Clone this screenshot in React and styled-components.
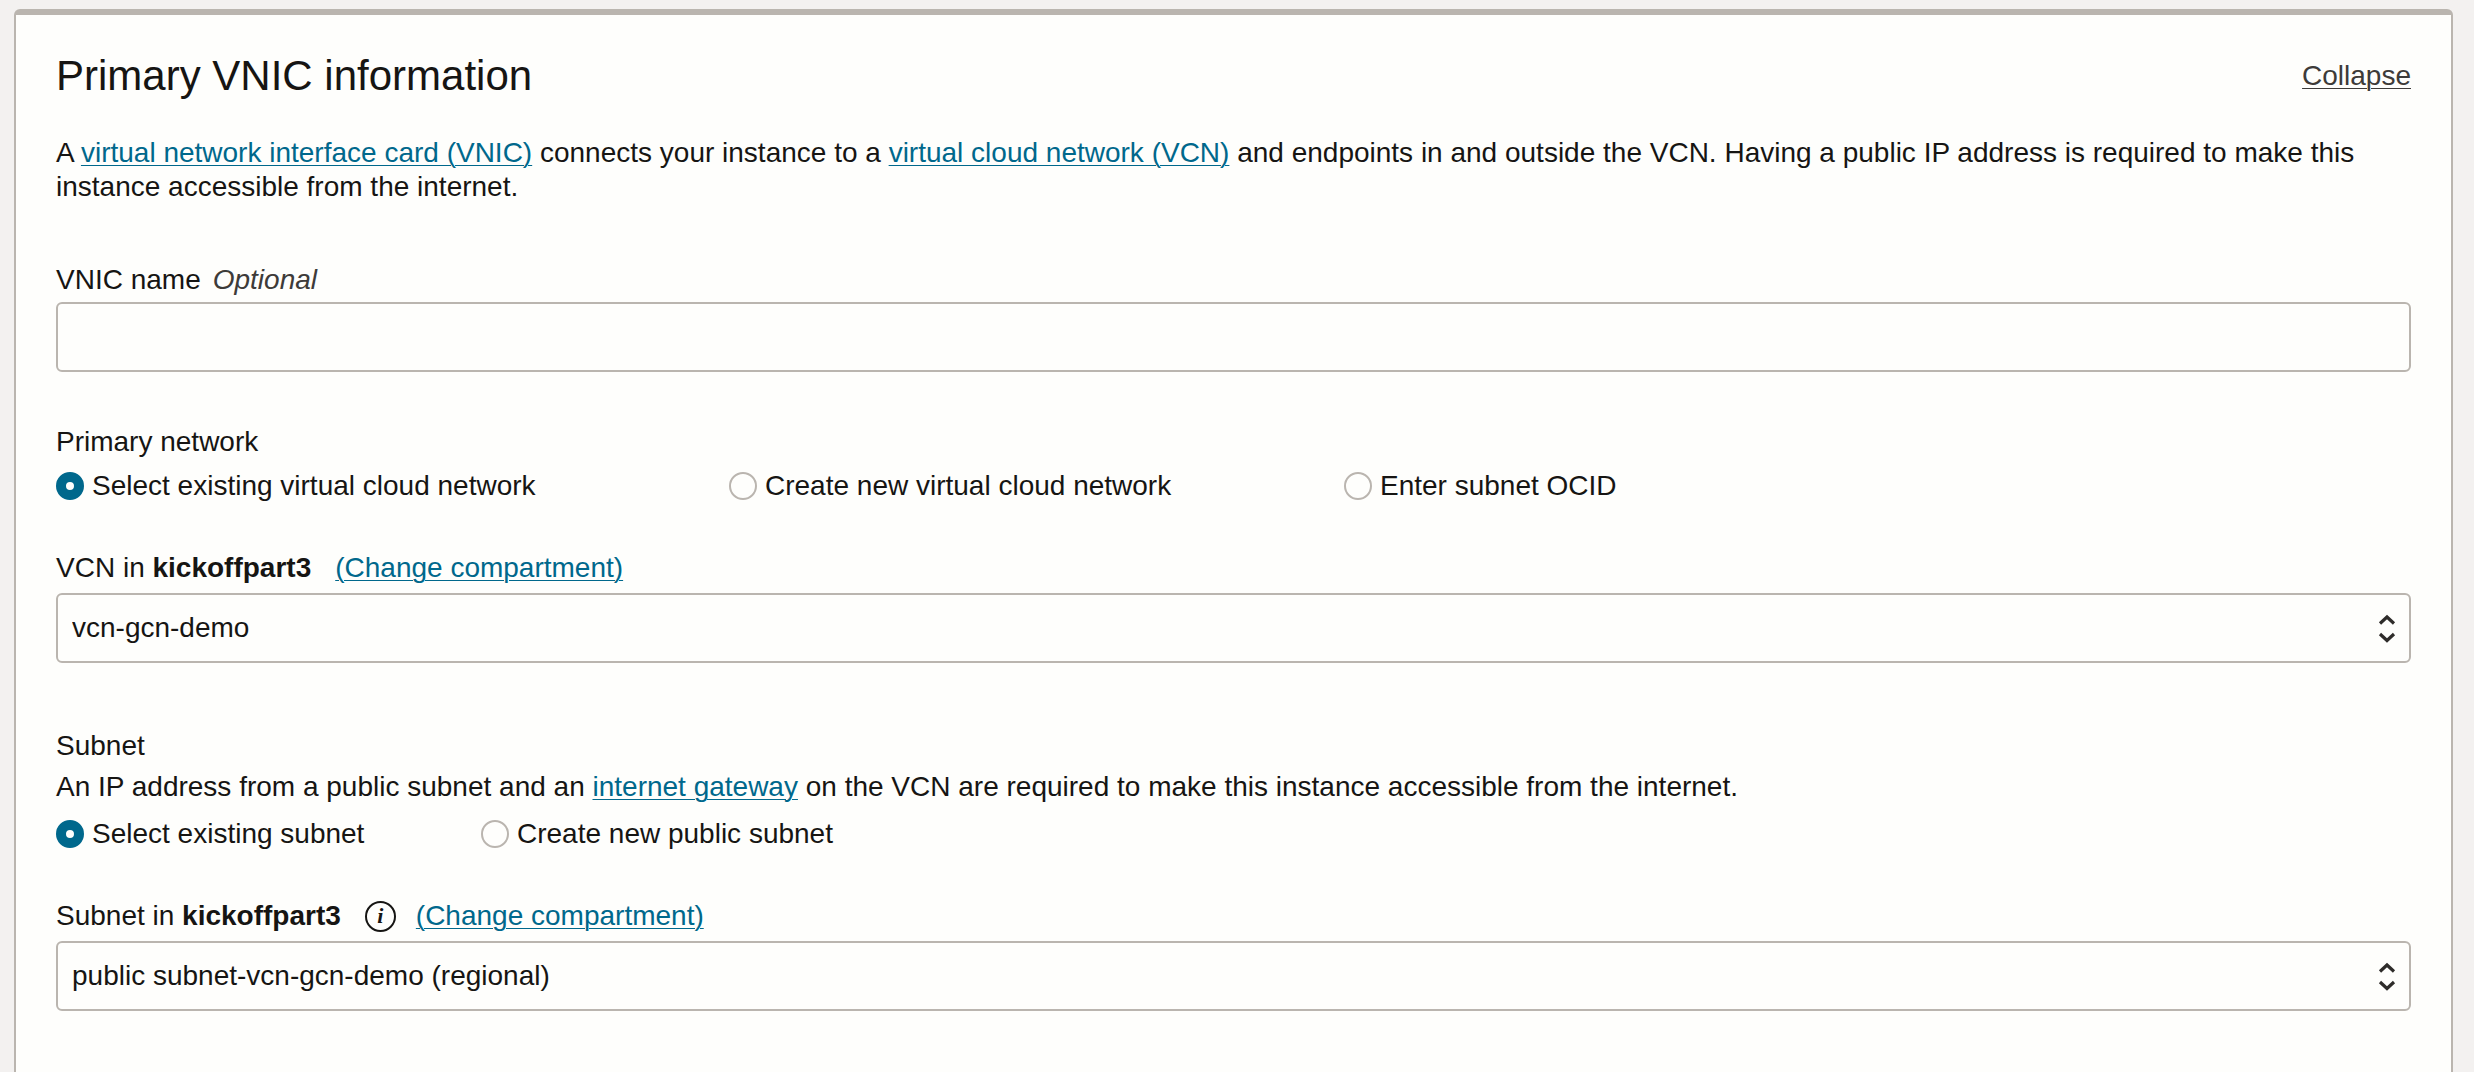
import React, { useId, useState } from "react";
import styled, { createGlobalStyle } from "styled-components";

const color = {
  page: "#f3f1f0",
  surface: "#fefefc",
  border: "#bab5af",
  text: "#161513",
  muted: "#3d3b39",
  link: "#00688c",
};

const GlobalStyle = createGlobalStyle`
  *, *::before, *::after { box-sizing: border-box; }
  body {
    margin: 0;
    background: ${color.page};
    color: ${color.text};
    font: 28px/34px "Liberation Sans", Arial, sans-serif;
  }
`;

const Page = styled.main`
  display: flex;
  flex-direction: column;
  min-height: 100vh;
  padding: 9px 21px 0 14px;
`;

const Panel = styled.section`
  flex: 1;
  padding: 35px 40px 40px;
  background: ${color.surface};
  border: 2px solid ${color.border};
  border-top-width: 6px;
  border-bottom: 0;
  border-radius: 6px 6px 0 0;
`;

const PanelHeader = styled.header`
  display: flex;
  align-items: center;
  justify-content: space-between;
  margin-bottom: 34px;
`;

const Title = styled.h2`
  margin: 0;
  font-size: 42px;
  line-height: 52px;
  font-weight: 400;
`;

const Link = styled.a`
  color: ${(p) => (p.$muted ? color.muted : color.link)};
  text-decoration: underline 1px;
  text-underline-offset: 3px;
`;

const Text = styled.p`
  margin: 0;
`;

const Field = styled.div`
  display: flex;
  flex-direction: column;
  gap: ${(p) => p.$gap}px;
  margin-top: ${(p) => p.$space}px;
`;

const LabelRow = styled.div`
  display: flex;
  align-items: center;
  gap: 24px;
`;

const Optional = styled.em`
  margin-left: 12px;
  color: ${color.muted};
`;

const TextInput = styled.input`
  width: 100%;
  height: 70px;
  padding: 0 14px;
  font: inherit;
  color: inherit;
  background: ${color.surface};
  border: 2px solid ${color.border};
  border-radius: 6px;
`;

const SelectWrap = styled.div`
  display: grid;
  align-items: center;

  > * { grid-area: 1 / 1; }
`;

const SelectBox = styled(TextInput).attrs({ as: "select" })`
  appearance: none;
`;

const Arrows = styled.svg`
  justify-self: end;
  margin-right: 14px;
  pointer-events: none;
`;

const Group = styled.fieldset`
  margin: ${(p) => p.$space}px 0 0;
  padding: 0;
  border: 0;
  min-width: 0;
`;

const Legend = styled.legend`
  padding: 0;
`;

const Hint = styled(Text)`
  margin-top: 7px;
`;

const Options = styled.div`
  display: grid;
  grid-template-columns: ${(p) => p.$columns};
  margin-top: ${(p) => p.$space}px;
`;

const Option = styled.label`
  display: flex;
  align-items: center;
  gap: 8px;
  white-space: nowrap;
`;

const Radio = styled.input.attrs({ type: "radio" })`
  appearance: none;
  flex: none;
  width: 28px;
  height: 28px;
  margin: 0;
  background: ${color.surface};
  border: 2px solid ${color.border};
  border-radius: 50%;

  &:checked {
    border: 10px solid ${color.link};
  }
`;

const InfoButton = styled.button`
  display: flex;
  align-items: center;
  justify-content: center;
  width: 31px;
  height: 31px;
  margin-right: -4px;
  padding: 0;
  font: italic 700 22px/24px "Liberation Serif", serif;
  color: ${color.text};
  background: none;
  border: 2px solid ${color.text};
  border-radius: 50%;
`;

function RadioGroup({ label, hint, options, columns, space, optionSpace }) {
  const name = useId();
  const [value, setValue] = useState(options[0]);
  return (
    <Group $space={space}>
      <Legend>{label}</Legend>
      {hint}
      <Options $columns={columns} $space={optionSpace}>
        {options.map((option) => (
          <Option key={option}>
            <Radio name={name} checked={value === option} onChange={() => setValue(option)} />
            {option}
          </Option>
        ))}
      </Options>
    </Group>
  );
}

function CompartmentSelect({ label, compartment, option, info }) {
  const id = useId();
  return (
    <Field $space={48} $gap={8}>
      <LabelRow>
        <label htmlFor={id}>
          {label} in <strong>{compartment}</strong>
        </label>
        {info && <InfoButton type="button" aria-label="More information">i</InfoButton>}
        <Link href="#compartment">(Change compartment)</Link>
      </LabelRow>
      <SelectWrap>
        <SelectBox id={id}>
          <option>{option}</option>
        </SelectBox>
        <Arrows width="20" height="32" viewBox="0 0 20 32" fill="none" stroke="#2e2c2a" strokeWidth="3.2" aria-hidden="true">
          <path d="M3 11.500 10 5l7 6.500M3 22l7 6.500 7-6.500" />
        </Arrows>
      </SelectWrap>
    </Field>
  );
}

export default function App() {
  return (
    <>
      <GlobalStyle />
      <Page>
        <Panel>
          <PanelHeader>
            <Title>Primary VNIC information</Title>
            <Link href="#collapse" $muted>Collapse</Link>
          </PanelHeader>
          <Text>
            A <Link href="#vnic">virtual network interface card (VNIC)</Link> connects your instance to a{" "}
            <Link href="#vcn">virtual cloud network (VCN)</Link> and endpoints in and outside the VCN. Having a public
            IP address is required to make this instance accessible from the internet.
          </Text>
          <Field $space={59} $gap={5}>
            <label htmlFor="vnic-name">
              VNIC name<Optional>Optional</Optional>
            </label>
            <TextInput id="vnic-name" type="text" />
          </Field>
          <RadioGroup
            label="Primary network"
            options={["Select existing virtual cloud network", "Create new virtual cloud network", "Enter subnet OCID"]}
            columns="673px 615px auto"
            space={53}
            optionSpace={10}
          />
          <CompartmentSelect label="VCN" compartment="kickoffpart3" option="vcn-gcn-demo" />
          <RadioGroup
            label="Subnet"
            hint={
              <Hint>
                An IP address from a public subnet and an <Link href="#gateway">internet gateway</Link> on the VCN are
                required to make this instance accessible from the internet.
              </Hint>
            }
            options={["Select existing subnet", "Create new public subnet"]}
            columns="425px auto"
            space={66}
            optionSpace={13}
          />
          <CompartmentSelect
            label="Subnet"
            compartment="kickoffpart3"
            option="public subnet-vcn-gcn-demo (regional)"
            info
          />
        </Panel>
      </Page>
    </>
  );
}
